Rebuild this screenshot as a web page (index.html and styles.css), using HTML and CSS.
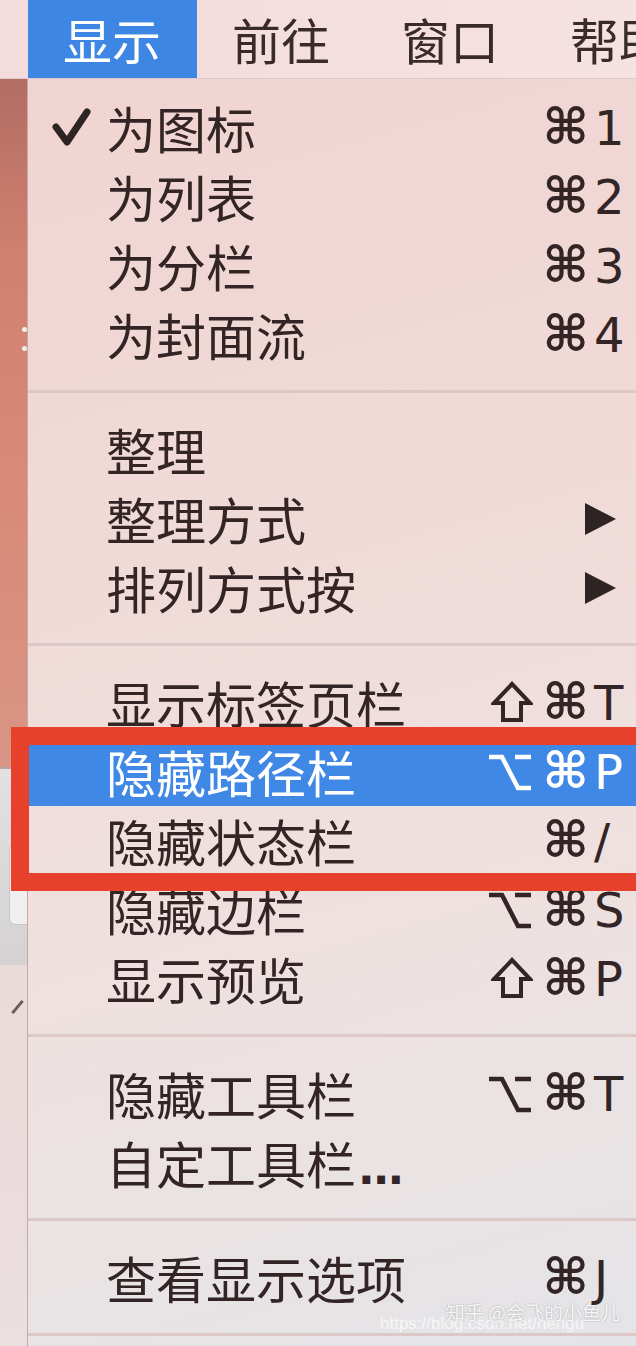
FILE: index.html
```html
<!DOCTYPE html>
<html lang="zh-CN">
<head>
    <meta charset="UTF-8">
    <meta name="viewport" content="width=device-width, initial-scale=1.0">
    <title>显示菜单</title>
    <link rel="stylesheet" href="styles.css">
</head>
<body>
    <div class="screen">
        <header class="menubar">
            <span class="menubar-item active">显示</span>
            <span class="menubar-item">前往</span>
            <span class="menubar-item">窗口</span>
            <span class="menubar-item">帮助</span>
        </header>

        <div class="content">
            <!-- window behind the menu, only a thin strip is visible -->
            <div class="backdrop">
                <div class="backdrop-top">
                    <span class="dot"></span>
                    <span class="dot"></span>
                </div>
                <div class="backdrop-window">
                    <span class="backdrop-red"></span>
                    <span class="backdrop-button"></span>
                </div>
                <div class="backdrop-lower">
                    <span class="slash"></span>
                </div>
            </div>

            <div class="menu">
                <div class="menu-item">
                    <span class="check">
                        <svg width="42" height="42" viewBox="0 0 42 42"><path d="M6 20 L17 35 L37 5" fill="none" stroke="#2f2424" stroke-width="7" stroke-linecap="round" stroke-linejoin="round"/></svg>
                    </span>
                    <span class="label">为图标</span>
                    <span class="mods"><span class="cmd">⌘</span></span>
                    <span class="key">1</span>
                </div>
                <div class="menu-item">
                    <span class="check"></span>
                    <span class="label">为列表</span>
                    <span class="mods"><span class="cmd">⌘</span></span>
                    <span class="key">2</span>
                </div>
                <div class="menu-item">
                    <span class="check"></span>
                    <span class="label">为分栏</span>
                    <span class="mods"><span class="cmd">⌘</span></span>
                    <span class="key">3</span>
                </div>
                <div class="menu-item">
                    <span class="check"></span>
                    <span class="label">为封面流</span>
                    <span class="mods"><span class="cmd">⌘</span></span>
                    <span class="key">4</span>
                </div>

                <div class="menu-sep"></div>

                <div class="menu-item">
                    <span class="check"></span>
                    <span class="label">整理</span>
                </div>
                <div class="menu-item">
                    <span class="check"></span>
                    <span class="label">整理方式</span>
                    <span class="submenu"></span>
                </div>
                <div class="menu-item">
                    <span class="check"></span>
                    <span class="label">排列方式按</span>
                    <span class="submenu"></span>
                </div>

                <div class="menu-sep"></div>

                <div class="menu-item">
                    <span class="check"></span>
                    <span class="label">显示标签页栏</span>
                    <span class="mods">
                        <svg class="shift" width="42" height="42" viewBox="0 0 42 42"><path d="M21 3 L39 22 L30 22 L30 39 L12 39 L12 22 L3 22 Z" fill="none" stroke="currentColor" stroke-width="4" stroke-linejoin="miter"/></svg>
                        <span class="cmd">⌘</span>
                    </span>
                    <span class="key">T</span>
                </div>
                <div class="marked">
                    <div class="menu-item selected">
                        <span class="check"></span>
                        <span class="label">隐藏路径栏</span>
                        <span class="mods">
                            <svg class="option" width="46" height="40" viewBox="0 0 46 40"><path d="M2 5 L15 5 L31 36 L44 36 M28 5 L44 5" fill="none" stroke="currentColor" stroke-width="4.5"/></svg>
                            <span class="cmd">⌘</span>
                        </span>
                        <span class="key">P</span>
                    </div>
                    <div class="menu-item">
                        <span class="check"></span>
                        <span class="label">隐藏状态栏</span>
                        <span class="mods"><span class="cmd">⌘</span></span>
                        <span class="key">/</span>
                    </div>
                </div>
                <div class="menu-item">
                    <span class="check"></span>
                    <span class="label">隐藏边栏</span>
                    <span class="mods">
                        <svg class="option" width="46" height="40" viewBox="0 0 46 40"><path d="M2 5 L15 5 L31 36 L44 36 M28 5 L44 5" fill="none" stroke="currentColor" stroke-width="4.5"/></svg>
                        <span class="cmd">⌘</span>
                    </span>
                    <span class="key">S</span>
                </div>
                <div class="menu-item">
                    <span class="check"></span>
                    <span class="label">显示预览</span>
                    <span class="mods">
                        <svg class="shift" width="42" height="42" viewBox="0 0 42 42"><path d="M21 3 L39 22 L30 22 L30 39 L12 39 L12 22 L3 22 Z" fill="none" stroke="currentColor" stroke-width="4" stroke-linejoin="miter"/></svg>
                        <span class="cmd">⌘</span>
                    </span>
                    <span class="key">P</span>
                </div>

                <div class="menu-sep"></div>

                <div class="menu-item">
                    <span class="check"></span>
                    <span class="label">隐藏工具栏</span>
                    <span class="mods">
                        <svg class="option" width="46" height="40" viewBox="0 0 46 40"><path d="M2 5 L15 5 L31 36 L44 36 M28 5 L44 5" fill="none" stroke="currentColor" stroke-width="4.5"/></svg>
                        <span class="cmd">⌘</span>
                    </span>
                    <span class="key">T</span>
                </div>
                <div class="menu-item">
                    <span class="check"></span>
                    <span class="label">自定工具栏<span class="dots">...</span></span>
                </div>

                <div class="menu-sep"></div>

                <div class="menu-item">
                    <span class="check"></span>
                    <span class="label">查看显示选项</span>
                    <span class="mods"><span class="cmd">⌘</span></span>
                    <span class="key">J</span>
                </div>

                <div class="menu-sep"></div>
            </div>
        </div>

        <div class="watermark">
            <span class="wm-url">https://blog.csdn.net/hengu</span>
            <span class="wm-name">知乎 @会飞的小鱼儿</span>
        </div>
    </div>
</body>
</html>
```

FILE: styles.css
```css
body {
    margin: 0;
    padding: 0;
    background-color: #f0dcda;
    font-family: "Noto Sans CJK SC", sans-serif;
    color: #332525;
}
.screen {
    position: relative;
    width: 636px;
    height: 1346px;
    overflow: hidden;
}

/* menu bar */
.menubar {
    display: flex;
    height: 78px;
    padding-left: 28px;
    white-space: nowrap;
    background: linear-gradient(90deg, #f3dcdb, #f6e2e1);
    border-bottom: 1px solid #e2c9c7;
}
.menubar-item {
    padding: 0 36px 0 35px;
    font-size: 49px;
    line-height: 78px;
    color: #3a2b2b;
}
.menubar-item.active {
    background-color: #3d86e4;
    color: white;
}

.content {
    display: flex;
    height: 1267px;
}

/* backdrop strip on the left */
.backdrop {
    display: flex;
    flex-direction: column;
    width: 27px;
    flex-shrink: 0;
}
.backdrop-top {
    height: 688px;
    display: flex;
    flex-direction: column;
    align-items: flex-end;
    padding-top: 248px;
    box-sizing: border-box;
    gap: 14px;
    background: linear-gradient(180deg, #b26d64 0%, #cf806f 25%, #d98a78 60%, #d89585 100%);
}
.dot {
    width: 5px;
    height: 5px;
    border-radius: 50%;
    background: #f2eeee;
}
.backdrop-window {
    height: 198px;
    display: flex;
    flex-direction: column;
    align-items: flex-end;
    background: linear-gradient(180deg, #e2e0e0, #d4d2d2);
    border-top: 2px solid #b9a6a3;
    box-sizing: border-box;
    padding-top: 18px;
}
.backdrop-red {
    width: 14px;
    height: 32px;
    border-radius: 16px 0 0 16px;
    background: #e0553e;
    margin-bottom: 24px;
}
.backdrop-button {
    width: 17px;
    height: 80px;
    border-radius: 6px 0 0 6px;
    background: #f0efef;
    border: 1px solid #c9c6c6;
    border-right: none;
}
.backdrop-lower {
    flex: 1;
    padding-top: 34px;
    background: linear-gradient(180deg, #eadada, #ecdfdf);
}
.slash {
    display: block;
    width: 3px;
    height: 16px;
    margin-left: 16px;
    background: #6b5a5a;
    transform: rotate(40deg);
}

/* the menu itself */
.menu {
    flex: 1;
    padding-top: 14px;
    border-left: 1px solid #c4a9a5;
    background: linear-gradient(165deg, #f0d4d2 0%, #f0dad7 35%, #efe0de 60%, #e9e3e4 85%, #e4e4e8 100%);
}
.menu-item {
    display: grid;
    grid-template-columns: 78px 1fr auto 28px;
    align-items: center;
    height: 69px;
    padding-right: 14px;
    font-size: 50px;
    color: #332525;
}
.menu-item.selected {
    background-color: #3f88e6;
    color: white;
}
.check {
    display: flex;
    padding-left: 22px;
}
.label {
    white-space: nowrap;
    line-height: 69px;
}
.dots {
    font-family: "DejaVu Sans", sans-serif;
    font-weight: bold;
    font-size: 44px;
    letter-spacing: -2px;
    margin-left: 2px;
}
.mods {
    display: flex;
    align-items: center;
    justify-content: flex-end;
    gap: 10px;
    padding-right: 5px;
}
.cmd {
    font-family: "DejaVu Sans", sans-serif;
    font-weight: bold;
    font-size: 50px;
    line-height: 69px;
}
.shift {
    margin-top: -2px;
}
.key {
    font-family: "DejaVu Sans", sans-serif;
    font-size: 48px;
}
.submenu {
    grid-column: 3 / 5;
    justify-self: end;
    margin-right: 6px;
    width: 0;
    height: 0;
    border-left: 31px solid #2f2424;
    border-top: 16px solid transparent;
    border-bottom: 16px solid transparent;
}
.menu-sep {
    height: 3px;
    margin: 21px 0 22px;
    background-color: #dcc9c7;
}

/* red annotation around two rows */
.marked {
    position: relative;
}
.marked::after {
    content: "";
    position: absolute;
    top: -10px;
    bottom: -16px;
    left: -17px;
    right: -30px;
    border: 18px solid #e8412b;
}

.watermark {
    position: absolute;
    right: 6px;
    bottom: 12px;
    width: 250px;
    height: 36px;
}
.wm-url {
    position: absolute;
    left: 0;
    bottom: 0;
    font-family: "Liberation Sans", sans-serif;
    font-size: 17px;
    color: rgba(255, 255, 255, 0.7);
    white-space: nowrap;
}
.wm-name {
    position: absolute;
    right: 10px;
    top: 0;
    font-size: 19px;
    color: rgba(255, 255, 255, 0.9);
    text-shadow: 0 0 2px rgba(0, 0, 0, 0.3);
    white-space: nowrap;
}
```
